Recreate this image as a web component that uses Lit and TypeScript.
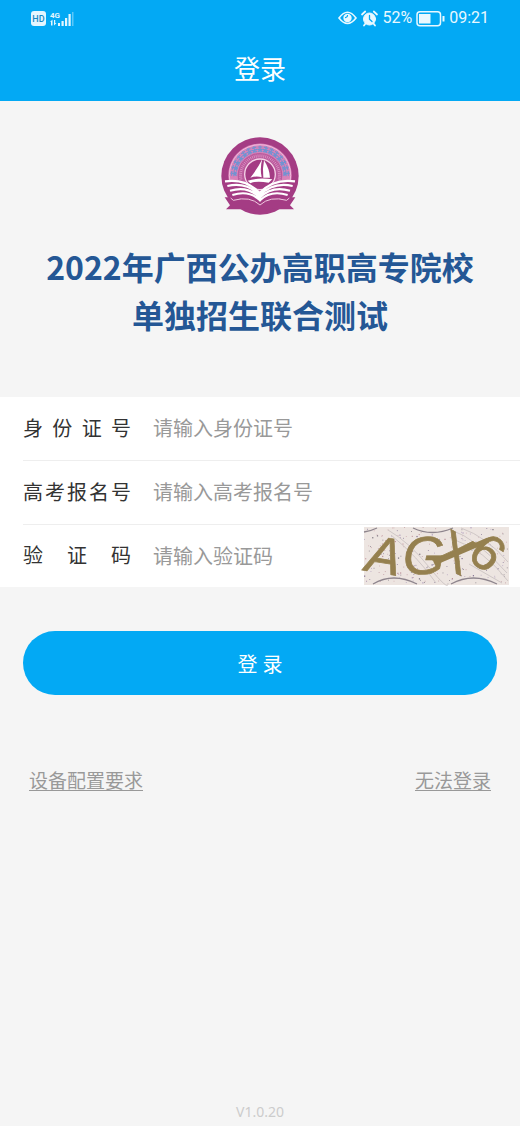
import { LitElement, html, css, svg } from "lit";
import { customElement } from "lit/decorators.js";

@customElement("status-bar")
class StatusBar extends LitElement {
  static styles = css`
    :host { display: flex; justify-content: space-between; align-items: center; height: 36px; padding: 0 31px; color: #e9f8ff; }
    .group { display: flex; align-items: center; gap: 4px; }
    .text { font-family: Roboto, sans-serif; font-size: 16px; line-height: 20px; }
    svg { display: block; overflow: visible; }
  `;
  render() {
    return html`
      <div class="group">
        <svg width="15" height="15" viewBox="0 0 15 15" role="img" aria-label="HD">
          <rect width="15" height="15" rx="3" fill="#e4f6ff" />
          <text x="7.5" y="11" text-anchor="middle" font-size="9" font-weight="500" fill="#1688c4" font-family="Roboto, sans-serif">HD</text>
        </svg>
        <svg width="24" height="17" viewBox="0 0 24 17" fill="#e4f6ff" role="img" aria-label="4G">
          <text x="0" y="8" font-size="8" font-weight="700" font-family="Roboto, sans-serif">4G</text>
          <path d="M0 12l2.500-2.500v6H1v-3.500zM4 10h1.200v3h1.300l-2.500 2.500zM8 13h2v3H8zM11.500 11h2.200v5h-2.200zM15 8h2.200v8h-2.200zM18.500 4h2.200v12h-2.200z" />
          <path d="M22 2h1.500v14h-1.500z" opacity=".4" />
        </svg>
      </div>
      <div class="group">
        <svg width="19" height="16" viewBox="0 0 19 16" fill="none" stroke="currentColor" stroke-width="1.600">
          <path d="M1 8Q9.500-3.500 18 8Q9.500 19 1 8z" />
          <circle cx="9.500" cy="8" r="4.200" fill="currentColor" stroke="none" />
          <path d="M7 7.500a2.200 2.200 0 0 0 2.500-2.500" stroke="#03a9f4" stroke-width="1.200" />
        </svg>
        <svg width="17" height="17" viewBox="0 0 17 17" fill="none" stroke="currentColor" stroke-linecap="round">
          <circle cx="8.500" cy="9" r="6" fill="currentColor" />
          <path d="M1 4.500L4.200 1.500M16 4.500L12.800 1.500M4.500 13.500L3 15.500M12.500 13.500L14 15.500" stroke-width="1.800" />
          <path d="M8.500 5.500V9.200L11 11.500" stroke="#03a9f4" stroke-width="1.300" />
        </svg>
        <span class="text">52%</span>
        <svg width="29" height="17" viewBox="0 0 29 17" fill="none" stroke="currentColor">
          <rect x="1" y="1.700" width="23.500" height="14" rx="3" stroke-width="1.500" />
          <path d="M3 4h11.500v9.500H3z" fill="currentColor" stroke="none" />
          <path d="M27.500 6v5.500" stroke-width="2" />
        </svg>
        <span class="text">09:21</span>
      </div>
    `;
  }
}

@customElement("school-emblem")
class SchoolEmblem extends LitElement {
  static styles = css`
    :host { display: block; }
    svg { display: block; margin: 0 auto; }
  `;
  render() {
    const rays = Array.from({ length: 37 }, (_, i) => {
      const a = Math.PI * (0.94 + (i / 36) * 1.12);
      return svg`<path d="M${117 + 54 * Math.cos(a)} ${115 + 54 * Math.sin(a)}L${117 + 63 * Math.cos(a)} ${115 + 63 * Math.sin(a)}" stroke="#d98cc0" stroke-width="3"/>`;
    });
    const marks = Array.from({ length: 15 }, (_, i) => {
      const deg = -86 + i * 12.3;
      return svg`<path transform="rotate(${deg} 117 115)" d="M110 30h14M109 37h16M117 26v20M111 45l4-6M123 45l-4-6" stroke="#6f93d2" stroke-width="3.500"/>`;
    });
    return html`
      <svg width="78" height="78" viewBox="0 0 234 234" fill="none" role="img" aria-label="校徽">
        <circle cx="117" cy="117" r="116" fill="#a43c84" />
        <path d="M26 142A95 95 0 1 1 208 142L186 176H48z" fill="#d982b9" />
        <circle cx="117" cy="115" r="92" stroke="#f0bbdc" stroke-width="3" />
        ${marks}
        <circle cx="117" cy="115" r="67" fill="#bb5b9d" />
        ${rays}
        <circle cx="117" cy="112" r="46" fill="#a43c84" stroke="#f4d3e7" stroke-width="4" />
        <path d="M124 66Q109 96 88 122Q107 116 122 121Q116 94 124 66z" fill="#fff" />
        <path d="M129 70Q124 96 127 122L147 122Q145 94 129 70z" fill="#fff" />
        <path d="M80 131Q112 121 154 127L143 137Q105 130 88 139z" fill="#fff" />
        <path d="M8 132Q72 119 117 165Q162 119 226 132L199 190Q148 174 117 201Q86 174 35 190z" fill="#a43c84" />
        <path d="M12 133Q76 124 116 168Q157 124 222 133M19 147Q78 134 116 175Q156 134 215 147M27 161Q81 145 116 182Q153 145 207 161M34 174Q84 158 117 190Q149 158 200 174" stroke="#fff" stroke-width="6.500" />
        <path d="M117 166v27" stroke="#fff" stroke-width="5" />
        <path d="M11 181H29L36 191Q86 172 117 204Q148 172 198 191L205 181H223L207 205L219 217H177Q139 211 131 226H103Q95 211 57 217H15L27 205z" fill="#a43c84" />
        <path d="M29 183L37 190Q87 176 117 204Q147 176 197 190L205 183" stroke="#efc9df" stroke-width="3" />
      </svg>
    `;
  }
}

@customElement("captcha-picture")
class CaptchaPicture extends LitElement {
  static styles = css`
    :host { display: block; }
    svg { display: block; overflow: visible; }
    .letters { font-family: "Liberation Sans", Arial, sans-serif; fill: #95804f; stroke: #95804f; stroke-width: 0.7px; }
  `;
  render() {
    let seed = 37;
    const next = () => (seed = (seed * 16807) % 2147483647) / 2147483647;
    const colours = ["#806f91", "#b98f98", "#caa2a9", "#ad9abb", "#77707b"];
    const dots = Array.from({ length: 230 }, (_, i) => {
      const size = i % 6 ? 0.8 : 1.2;
      return svg`<rect x=${next() * 143} y=${next() * 56} width=${size} height=${size} fill=${colours[i % 5]}/>`;
    });
    return html`
      <svg width="145" height="58" viewBox="0 0 145 58" fill="none" role="img" aria-label="验证码图片">
        <path d="M0 0h145v58H0z" fill="#ede5e1" />
        ${dots}
        <path d="M24 3Q45 15 65 40T84 56M27 8Q54 30 72 56M87 3Q112 11 143 46M91 13Q120 23 144 54M97 1Q123 10 144 35M105 37L138 56" stroke="#cfc7c6" />
        <path d="M0 5Q7 4 13 1M49 1Q68 10 89 1M9 57Q29 45 53 57M87 57Q109 45 133 57" stroke="#8e858d" stroke-width="1.300" />
        <g class="letters">
          <text x="3" y="46" font-size="52" font-style="italic" transform="rotate(9 18 28)">A</text>
          <text x="39" y="47" font-size="54" font-style="italic">G</text>
          <text x="91" y="43" font-size="52" text-anchor="middle" transform="rotate(29 91 26)">X</text>
          <text x="124" y="43" font-size="51" text-anchor="middle" transform="rotate(42 124 25)">6</text>
        </g>
        <path d="M70 36L124 13" stroke="#95804f" stroke-width="5" />
      </svg>
    `;
  }
}

@customElement("app-root")
class AppRoot extends LitElement {
  static styles = css`
    :host { display: flex; flex-direction: column; min-height: 100vh; background: #f5f5f5; font-family: "Noto Sans", "Noto Sans CJK SC", sans-serif; color: #333; }
    * { box-sizing: border-box; }
    .top { background: #03a9f4; color: #fff; }
    .heading { margin: 0; padding: 18px 0 19px; font-family: "Noto Sans CJK SC", sans-serif; font-size: 26px; line-height: 28px; font-weight: 400; text-align: center; }
    main { flex: 1; padding-top: 36px; }
    .title { margin: 0; padding: 27px 16px 59px; font-family: "Noto Sans CJK SC", sans-serif; font-size: 32px; line-height: 48px; font-weight: 700; color: #245795; text-align: center; }
    .line { display: block; }
    .fields { background: #fff; padding-left: 23px; }
    .row { display: flex; align-items: center; gap: 22px; height: 64px; padding-right: 11px; border-bottom: 1px solid #eee; font-size: 20px; }
    .row:last-child { border-bottom: 0; height: 62px; }
    label { flex: none; width: 108px; line-height: 30px; text-align: justify; text-align-last: justify; }
    input { flex: 1; min-width: 0; height: 40px; padding: 0; border: 0; outline: 0; background: transparent; font: inherit; color: #333; }
    input::placeholder { color: #999; opacity: 1; }
    .captcha { flex: none; padding: 0; border: 0; background: none; cursor: pointer; }
    .submit { display: block; width: calc(100% - 46px); height: 64px; margin: 44px 23px 0; border: 0; border-radius: 32px; background: #03a9f4; color: #fff; font: inherit; font-size: 20px; cursor: pointer; }
    .links { display: flex; justify-content: space-between; padding: 72px 29px 0; font-size: 19px; line-height: 28px; }
    a { color: #999; text-underline-offset: 2px; }
    footer { font-size: 14px; line-height: 20px; padding-bottom: 4px; color: #ccc; text-align: center; }
  `;
  render() {
    return html`
      <header class="top">
        <status-bar></status-bar>
        <h1 class="heading">登录</h1>
      </header>
      <main>
        <school-emblem></school-emblem>
        <h2 class="title"><span class="line">2022年广西公办高职高专院校</span><span class="line">单独招生联合测试</span></h2>
        <form @submit=${(e: Event) => e.preventDefault()}>
          <div class="fields">
            <div class="row"><label for="idno">身份证号</label><input id="idno" placeholder="请输入身份证号" /></div>
            <div class="row"><label for="exam">高考报名号</label><input id="exam" placeholder="请输入高考报名号" /></div>
            <div class="row">
              <label for="code">验证码</label><input id="code" placeholder="请输入验证码" />
              <button class="captcha" type="button" aria-label="刷新验证码"><captcha-picture></captcha-picture></button>
            </div>
          </div>
          <button class="submit" type="submit">登 录</button>
        </form>
        <nav class="links"><a href="#requirements">设备配置要求</a><a href="#help">无法登录</a></nav>
      </main>
      <footer>V1.0.20</footer>
    `;
  }
}
